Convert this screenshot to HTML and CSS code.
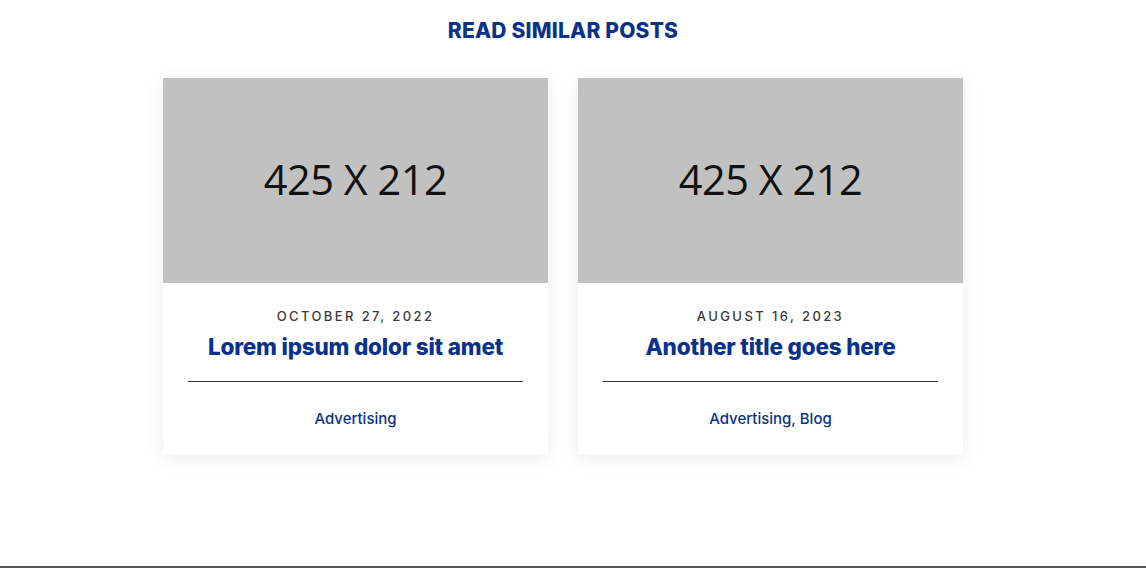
FILE: index.html
```html
<!DOCTYPE html>
<html lang="en">
<head>
<meta charset="utf-8">
<title>Read Similar Posts</title>
<link rel="stylesheet" href="styles.css">
</head>
<body>
<main class="page">
  <section class="similar">
    <h2 class="similar-title">READ SIMILAR POSTS</h2>
    <div class="cards">
      <article class="card">
        <div class="thumb"><span class="thumb-text">425 X 212</span></div>
        <div class="card-body">
          <div class="date">OCTOBER 27, 2022</div>
          <h3 class="post-title">Lorem ipsum dolor sit amet</h3>
          <hr class="divider">
          <div class="cats">Advertising</div>
        </div>
      </article>
      <article class="card">
        <div class="thumb"><span class="thumb-text">425 X 212</span></div>
        <div class="card-body">
          <div class="date">AUGUST 16, 2023</div>
          <h3 class="post-title">Another title goes here</h3>
          <hr class="divider">
          <div class="cats">Advertising, Blog</div>
        </div>
      </article>
    </div>
  </section>
</main>
<footer class="footer-line"></footer>
</body>
</html>
```

FILE: styles.css
```css
html, body {
  margin: 0;
  padding: 0;
  background: #ffffff;
}
body {
  font-family: "Inter", "Noto Sans", sans-serif;
  height: 568px;
  display: flex;
  flex-direction: column;
  overflow: hidden;
}
.page {
  flex: 1;
  display: flex;
  justify-content: center;
}
.similar {
  width: 800px;
  margin-right: 20px;
  padding-top: 18px;
}
.similar-title {
  margin: 0;
  text-align: center;
  color: #0a3287;
  font-size: 21px;
  font-weight: 800;
  line-height: 26px;
  letter-spacing: 0.2px;
}
.cards {
  display: flex;
  gap: 30px;
  margin-top: 34px;
}
.card {
  width: 385px;
  background: #fff;
  box-shadow: 0 4px 18px rgba(0, 0, 0, 0.08);
}
.thumb {
  height: 205px;
  background: #c1c1c1;
  display: flex;
  align-items: center;
  justify-content: center;
}
.thumb-text {
  font-family: "Open Sans", "Noto Sans", sans-serif;
  font-size: 41.5px;
  color: #111;
  letter-spacing: -0.5px;
  margin-top: -4px;
}
.card-body {
  padding: 25px 25px 26px;
  text-align: center;
}
.date {
  font-size: 13px;
  font-weight: 500;
  letter-spacing: 2.4px;
  color: #3a3a3a;
  line-height: 16px;
}
.post-title {
  margin: 10px 0 0;
  font-size: 22.5px;
  font-weight: 800;
  color: #0a3287;
  line-height: 26px;
  letter-spacing: -0.2px;
}
.divider {
  margin: 21px 0 0;
  border: 0;
  border-top: 1px solid #333;
  height: 0;
}
.cats {
  margin-top: 27px;
  font-size: 15px;
  font-weight: 500;
  color: #0a3287;
  line-height: 20px;
}
.footer-line {
  height: 2px;
  background: #555;
}
```
